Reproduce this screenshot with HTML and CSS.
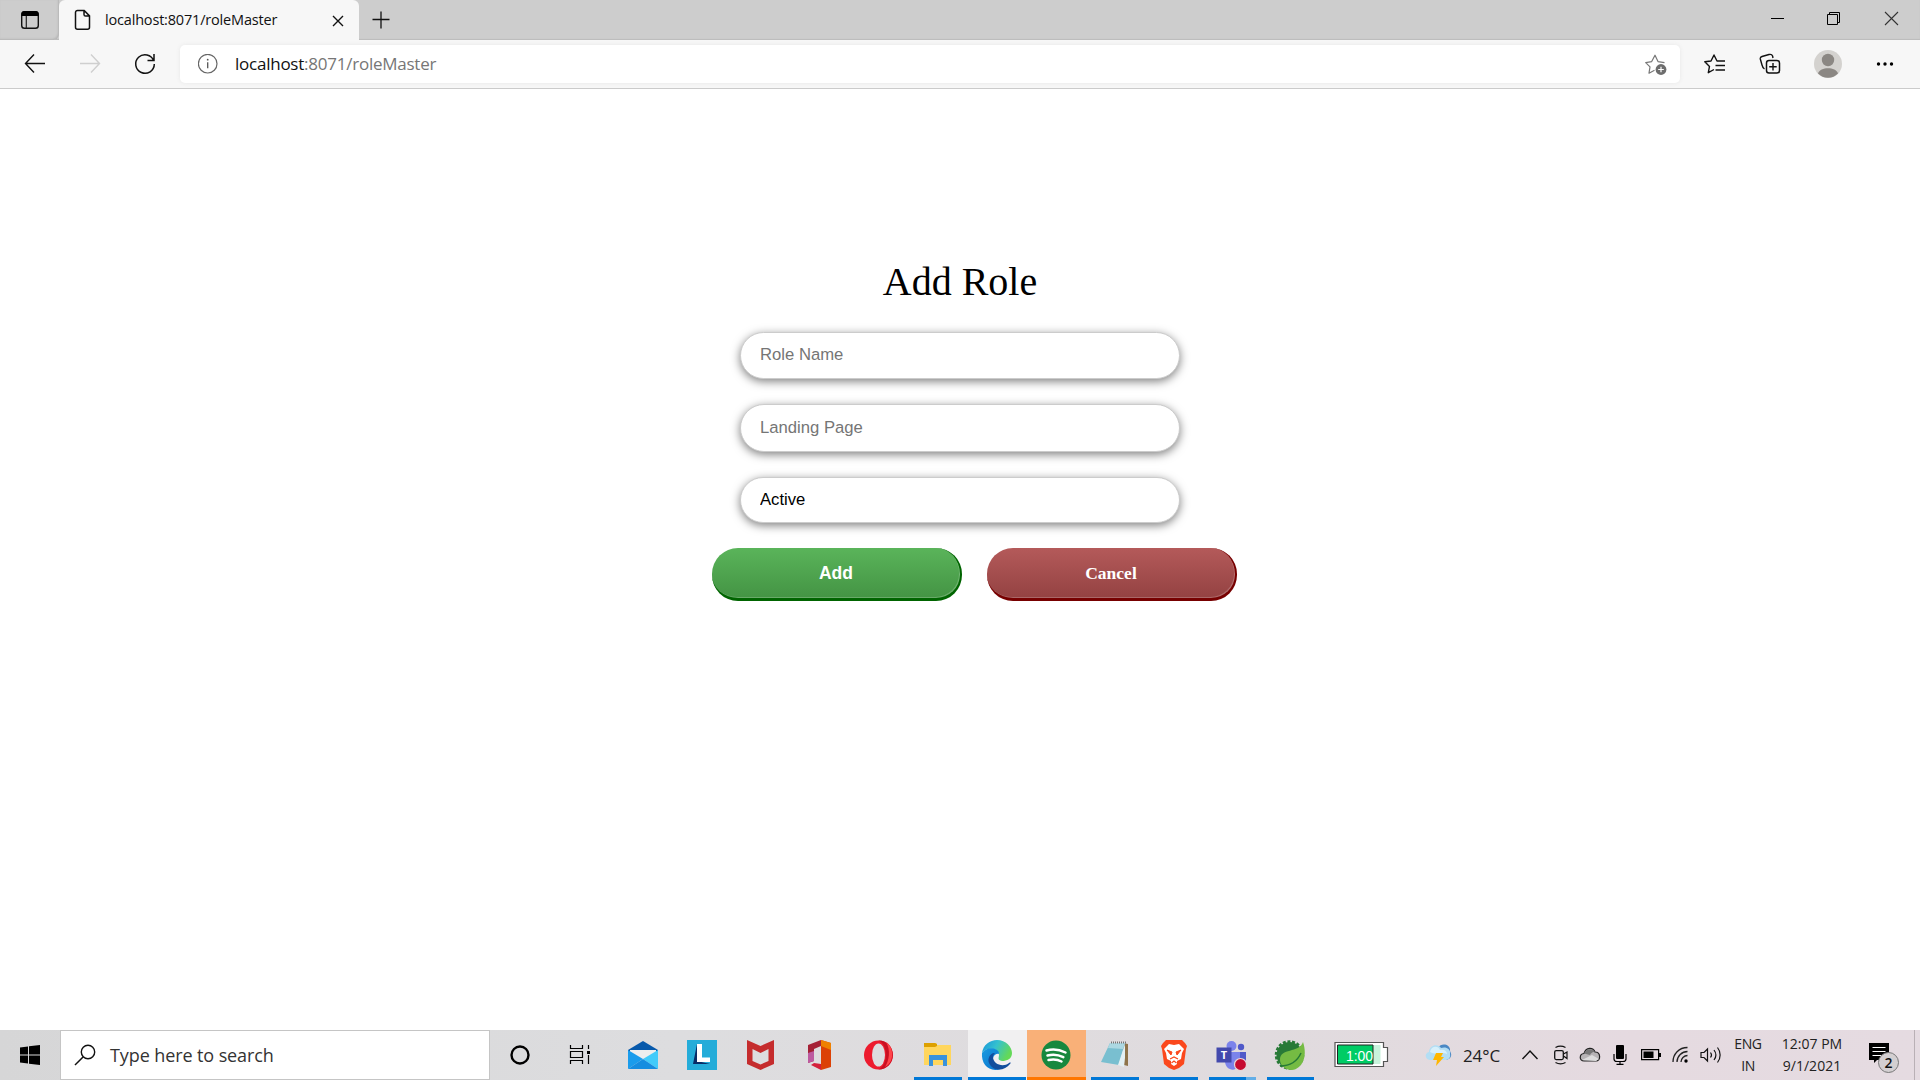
FILE: index.html
```html
<!DOCTYPE html>
<html lang="en">
<head>
<meta charset="utf-8">
<title>localhost:8071/roleMaster</title>
<link rel="stylesheet" href="styles.css">
</head>
<body>
<div class="screen">
  <header class="tabbar">
    <div class="tab-actions">
      <svg width="59" height="40" viewBox="0 0 59 40"><rect x="21.7" y="11.7" width="16.6" height="16.6" rx="2.8" fill="none" stroke="#111" stroke-width="1.4"/><path d="M21.5 16V14a3 3 0 0 1 3-3h11a3 3 0 0 1 3 3v2z" fill="#000"/><path d="M26.3 16v12" stroke="#222" stroke-width="1.2"/></svg>
    </div>
    <div class="tab">
      <svg class="tab-file" width="18" height="22" viewBox="0 0 18 22"><path d="M3.5 1.5h6.7l5.3 5.4v11.3a2 2 0 0 1-2 2h-10a2 2 0 0 1-2-2V3.500a2 2 0 0 1 2-2zM10 1.700v3.800a1.600 1.600 0 0 0 1.600 1.600h3.800" fill="none" stroke="#111" stroke-width="1.5"/></svg>
      <span class="tab-title">localhost:8071/roleMaster</span>
      <svg class="tab-close" width="12" height="12" viewBox="0 0 12 12"><path d="M1 1l10 10M11 1L1 11" stroke="#111" stroke-width="1.4"/></svg>
    </div>
    <svg class="tab-new" width="20" height="20" viewBox="0 0 20 20"><path d="M10 1.500v17M1.500 9.500h17" stroke="#111" stroke-width="1.300"/></svg>
    <div class="window-controls">
      <svg width="57" height="38" viewBox="0 0 57 38"><path d="M22 18.500h13" stroke="#000"/></svg>
      <svg width="57" height="38" viewBox="0 0 57 38"><path d="M21.500 14.500h10v10h-10zM23.500 14v-1.500h10v10H32" fill="none" stroke="#000"/></svg>
      <svg width="57" height="38" viewBox="0 0 57 38"><path d="M22 12l13 13M35 12L22 25" stroke="#333" stroke-width="1.100"/></svg>
    </div>
  </header>
  <nav class="toolbar">
    <svg width="69" height="48" viewBox="0 0 69 48"><path d="M45 23.500H26M34 14.500l-8.500 9 8.500 9" fill="none" stroke="#111" stroke-width="1.400"/></svg>
    <svg width="41" height="48" viewBox="0 0 41 48"><path d="M11 23.500h19.500M22 14.500l8.500 9-8.500 9" fill="none" stroke="#cfcfcf" stroke-width="1.400"/></svg>
    <svg width="70" height="48" viewBox="0 0 70 48"><path d="M43.700 20.700A9.300 9.300 0 1 0 44.300 24M44 14v6.500h-6.500" fill="none" stroke="#111" stroke-width="1.500"/></svg>
    <div class="address">
      <svg width="20" height="20" viewBox="0 0 20 20"><circle cx="9.700" cy="9.700" r="9.300" fill="none" stroke="#666" stroke-width="1.200"/><path d="M9.700 8.300v6" stroke="#555" stroke-width="1.300"/><circle cx="9.700" cy="5.700" r=".9" fill="#555"/></svg>
      <span class="url"><span class="url-host">localhost</span>:8071/roleMaster</span>
      <svg class="add-favorite" width="24" height="24" viewBox="0 0 24 24"><path d="M9.500 18.300l-5.500 2.900 1-6.300-4.300-4.300 6-1L10 3.200l3 6.400 6.500 1" fill="none" stroke="#777" stroke-width="1.200" stroke-linejoin="round"/><circle cx="16" cy="17.500" r="5.400" fill="#6d6d6d"/><path d="M16 14.700v5.600M13.200 17.500h5.600" stroke="#fff" stroke-width="1.200"/></svg>
    </div>
    <div class="tools">
      <svg width="22" height="22" viewBox="0 0 22 22"><path d="M10 16.500l-5.700 3.200 1.200-6.300-4.700-4.600 6.200-.8L10 2l3 6h8M11.500 12.500H21M11.500 17H21" fill="none" stroke="#111" stroke-width="1.400" stroke-linejoin="round"/></svg>
      <svg width="22" height="22" viewBox="0 0 22 22"><rect x="7.500" y="7.500" width="13" height="12.500" rx="2.500" fill="none" stroke="#111" stroke-width="1.500"/><path d="M14 10v7.500M10.200 13.700h7.500M5.500 16C4 15.200 3.500 14 3 12L1.300 6C1 4.500 1.500 4 3 3.500l7-2c2-.5 3 0 3.600 1.500L14 5" fill="none" stroke="#111" stroke-width="1.400"/></svg>
      <svg width="28" height="28" viewBox="0 0 28 28"><circle cx="14" cy="14" r="14" fill="#d4d2cf"/><circle cx="14" cy="10" r="6.200" fill="#8b8783"/><path d="M4 23.500c2-7 18-7 20 0a14 14 0 0 1-20 0z" fill="#8b8783"/></svg>
      <svg width="20" height="6" viewBox="0 0 20 6"><circle cx="3.500" cy="3" r="1.700"/><circle cx="10" cy="3" r="1.700"/><circle cx="16.500" cy="3" r="1.700"/></svg>
    </div>
  </nav>
  <main class="page">
    <h1 class="title">Add Role</h1>
    <form class="role-form">
      <input class="field" type="text" placeholder="Role Name">
      <input class="field field-landing" type="text" placeholder="Landing Page">
      <select class="field field-status"><option>Active</option></select>
      <div class="actions">
        <button class="button button-add" type="button">Add</button>
        <button class="button button-cancel" type="button">Cancel</button>
      </div>
    </form>
  </main>
  <footer class="taskbar">
    <div class="start"><svg width="20" height="20" viewBox="0 0 20 20"><path d="M0 2.500L8 1.500v8H0zM9 1.300L20 0v9.500H9zM0 10.500h8v8l-8-1zM9 10.500h11V20L9 18.700z"/></svg></div>
    <div class="search">
      <svg width="22" height="22" viewBox="0 0 22 22"><circle cx="14" cy="8" r="6.700" fill="none" stroke="#111" stroke-width="1.400"/><path d="M9.300 12.700L1 21" stroke="#111" stroke-width="1.500"/></svg>
      <span class="search-text">Type here to search</span>
    </div>
    <div class="apps">
      <svg class="app-cortana" width="59" height="50" viewBox="0 0 59 50"><circle cx="30" cy="25" r="8.500" fill="none" stroke="#000" stroke-width="2.400"/></svg>
      <svg class="app-taskview" width="65" height="50" viewBox="0 0 65 50"><path d="M21.500 15v3.500h12V15M21.500 34v-3.500h12V34M21.500 21.500h12v6h-12zM39.500 15v4M39.500 25v9" fill="none" stroke="#000" stroke-width="1.200"/><path d="M38 21h3v3h-3z"/></svg>
      <svg width="59" height="50" viewBox="0 0 59 50"><path d="M14 20L29 11l15 9v3H14z" fill="#0759ab"/><path d="M16 20h26v11H16z" fill="#eee"/><path d="M14 20l15 9-15 10z" fill="#1a9cec"/><path d="M44 20v19L29 29z" fill="#42cbfa"/><path d="M14 39l15-10 15 10z" fill="#168de0"/></svg>
      <svg width="59" height="50" viewBox="0 0 59 50"><path d="M14 10h30v30H14z" fill="#24acd9"/><path d="M24 14l-4 20h17l-13-3z" fill="#082c67"/><path d="M24 14h5v13.500h8V32H24z" fill="#fff"/></svg>
      <svg width="59" height="50" viewBox="0 0 59 50"><path d="M15 10l13.500 6 13.500-6v24L28.500 40l-13.500-6zM20.500 19v12l8 3.500 8-3.500V19l-8 4z" fill="#c52c2d" fill-rule="evenodd"/></svg>
      <svg width="59" height="50" viewBox="0 0 59 50"><path d="M17 15l13-5v6l-7 3v12l-6 2z" fill="#a52136"/><path d="M17 23l6-2v10l-6 2z" fill="#bd5ba0"/><path d="M30 10l10 3v24l-10 3z" fill="#dc4105"/><path d="M30 10l10 3v7l-10-4z" fill="#ef8000"/><path d="M20 35l3-2 7 1v6z" fill="#d4213c"/></svg>
      <svg width="59" height="50" viewBox="0 0 59 50"><ellipse cx="28.500" cy="25" rx="14.500" ry="14.500" fill="#ed1b2e"/><path d="M28.500 10.500c19 0 19 29 0 29 10-4 10-25 0-29z" fill="#c91022"/><path d="M35 37c10-5 9-20 1-25 5 8 3 19-1 25z" fill="#ff454b"/><ellipse cx="28.500" cy="25" rx="6.500" ry="11.500" fill="#dddcdf"/></svg>
      <svg class="app-running" width="59" height="50" viewBox="0 0 59 50"><path d="M15 13h12l1 2h14v20H15z" fill="#ffd65d"/><path d="M15 13h11l2 1v2l-2 1H15z" fill="#dda000"/><path d="M20 36V25h18v11h-4v-6H24v6z" fill="#3992db"/><path d="M5 47h48v3H5z" fill="#0078d7"/></svg>
      <svg class="app-edge" width="59" height="50" viewBox="0 0 59 50"><defs><linearGradient id="edgeTop" x2="1" y2=".4"><stop stop-color="#1793dc"/><stop offset=".5" stop-color="#35c1cf"/><stop offset="1" stop-color="#64d958"/></linearGradient><linearGradient id="edgeSide" y2="1"><stop stop-color="#1a9be0"/><stop offset="1" stop-color="#0870cc"/></linearGradient></defs><path d="M14 23c1-8 8-13 15-13 9 0 15 7 15 13 0 6-5 8-10 8-5-1-3-3-3-6 0-8-13-8-17-2z" fill="url(#edgeTop)"/><path d="M14 23c5-8 18-5 17 1-8-2-9 15 2 15C21 43 13 34 14 23z" fill="url(#edgeSide)"/><path d="M25 27c0 7 10 11 16 6 2-1 2 0 1 1-5 7-17 8-21-1-2-5 2-11 6-10-1 1-2 2-2 4z" fill="#124e9d"/><path d="M0 47h58v3H0z" fill="#0078d7"/></svg>
      <svg class="app-spotify" width="59" height="50" viewBox="0 0 59 50"><circle cx="29" cy="25" r="14.500" fill="#17883e"/><path d="M19.500 20.500c7-2 13-1 19 2M20.500 25.500c6-1.500 11-.8 15.800 1.700M21.500 30c5-1 9-.7 13 1.500" fill="none" stroke="#fff" stroke-width="2.500" stroke-linecap="round"/><path d="M0 47h59v3H0z" fill="#ff7600"/></svg>
      <svg width="59" height="50" viewBox="0 0 59 50"><path d="M37 13l5 1v22l-4-1z" fill="#8f744b"/><path d="M24 13h15l-6 22-18-3z" fill="#79bfd0"/><path d="M24 13h15l-2 6-15-1z" fill="#acd8e2"/><path d="M39 14l-7 21 6 2 1-9z" fill="#e3f0f4"/><path d="M25 12.500h15" stroke="#777" stroke-width="2" stroke-dasharray="1 1"/><path d="M5 47h48v3H5z" fill="#0078d7"/></svg>
      <svg width="59" height="50" viewBox="0 0 59 50"><path d="M21 10h16l3 3 2 3-1 3-2 15-5 4-5 2-5-2-5-4-2-15-1-3 2-3z" fill="#fb481d"/><path d="M24 14l5 1 5-1 5 5-2 4-1 6-4 2v3l-3 2-3-2v-3l-4-2-1-6-2-4z" fill="#fff"/><path d="M22 20l5 2-1 3zM36 20l-5 2 1 3z" fill="#fb481d" stroke="#fb481d" stroke-width="1"/><path d="M25 29l4-2 4 2M26.500 33l2.500-2 2.500 2" fill="none" stroke="#fb481d" stroke-width="1.200"/><path d="M5 47h48v3H5z" fill="#0078d7"/></svg>
      <svg width="59" height="50" viewBox="0 0 59 50"><circle cx="27.500" cy="16" r="5" fill="#7b83eb"/><circle cx="37" cy="17" r="3.200" fill="#5059c9"/><path d="M32 22h10v9c0 5-7 7-10 2z" fill="#5059c9"/><path d="M21 22h15v9c0 12-15 11-15 0z" fill="#7b83eb"/><path d="M12.500 17.500h15v15h-15z" fill="#4349ad"/><text class="teams-letter" x="20" y="29" text-anchor="middle">T</text><circle cx="36.500" cy="34.500" r="6" fill="#c60b30" stroke="#e7dada" stroke-width="1.200"/><path d="M5 47h37v3H5z" fill="#0078d7"/><path d="M42 47h10v3H42z" fill="#63aee7"/></svg>
      <svg width="59" height="50" viewBox="0 0 59 50"><circle cx="26.500" cy="25" r="13" fill="#287a37"/><circle cx="26.500" cy="25" r="13.500" fill="none" stroke="#287a37" stroke-width="2.500" stroke-dasharray="3 1.700"/><path d="M40 12c5 15-1 27-11 28-7 0-12-5-12-10 0-13 19-6 23-18z" fill="#75bb43"/><path d="M17 36c10 0 17-4 21-13" fill="none" stroke="#267a36" stroke-width="1.500"/><path d="M4 47h47v3H4z" fill="#0078d7"/></svg>
      <svg class="battery-meter" width="70" height="50" viewBox="0 0 70 50"><path d="M13 12.500h48.500v5h4v14h-4v5H13z" fill="#fff" stroke="#555" stroke-width="1.200"/><path d="M15.500 15h43v19h-43z" fill="#c9f2dc"/><path d="M15.500 15h35.500v19H15.500z" fill="#00cc65" stroke="#222" stroke-width="1"/><text class="battery-time" x="37.500" y="30.500" text-anchor="middle">1:00</text></svg>
    </div>
    <div class="tray">
      <svg class="weather" width="28" height="24" viewBox="0 0 28 24"><path d="M13 5c3-6 13-4 12 3 3 5 0 9-5 9z" fill="#4a88c4"/><path d="M5 17C0 17-1 10 4 9c0-7 9-9 12-4 6-2 10 2 9 6 1 4-2 6-5 6z" fill="#b3def4"/><path d="M5 9c1-6 8-7 10-2 4-1 7 1 7 4-5-3-10 2-17-2z" fill="#d7f0fb"/><path d="M11 10h7l-2 4h3l-8 9 1-6H8z" fill="#ffb700"/></svg>
      <span class="temperature">24°C</span>
      <svg class="chevron" width="18" height="12" viewBox="0 0 18 12"><path d="M1.500 10L9 2l7.500 8" fill="none" stroke="#111" stroke-width="1.400"/></svg>
      <svg class="meet" width="18" height="20" viewBox="0 0 18 20"><rect x="2.700" y="5.600" width="8.600" height="9" rx="1.500" fill="none" stroke="#111" stroke-width="1.300"/><path d="M11.500 9l3.500-2v6.500L11.500 11M3.500 2.500c3-1.600 7-1.600 10 0M3.500 17.500c3 1.600 7 1.600 10 0" fill="none" stroke="#111" stroke-width="1.200"/></svg>
      <svg class="cloud" width="22" height="16" viewBox="0 0 22 16"><path d="M5 14C0 14 0 7 5 6.500 7 0 14 0 16 5c6 0 6 9 1 9z" fill="#b7b4b6" stroke="#222" stroke-width="1.200"/><path d="M5 6.500C7 1 13 1 16 5c-4 0-4 2-5 3z" fill="#777"/><path d="M3 13l10-5 7 4-3 2z" fill="#ddd"/></svg>
      <svg class="mic" width="14" height="20" viewBox="0 0 14 20"><rect x="3" y="0" width="8" height="14" rx="1"/><path d="M1 9v5c0 2 1 2.500 3 2.500h6c2 0 3-.5 3-2.500V9M7 17v2M3.500 19.400h7" fill="none" stroke="#000" stroke-width="1.200"/></svg>
      <svg class="charge" width="20" height="12" viewBox="0 0 20 12"><path d="M.6.600h17v10H.6z" fill="none" stroke="#000" stroke-width="1.200"/><path d="M2.500 2.500h10v6.500h-10zM18 4h2v4h-2z"/></svg>
      <svg class="wifi" width="18" height="18" viewBox="0 0 18 18"><path d="M1 16C1 8 7 1.500 15.500 1.500M5 16c0-6 5-10.500 10.500-10.500M9 16c0-3.500 3-6.500 6.500-6.500" fill="none" stroke="#222" stroke-width="1.300"/><circle cx="14" cy="15" r="1.700"/></svg>
      <svg class="volume" width="22" height="18" viewBox="0 0 22 18"><path d="M1 6.500h3L7.500 3v12L4 11.500H1zM10.500 6.500c1.200 1.500 1.200 3.500 0 5M14 4c2.300 3 2.300 7 0 10M17.500 1.500c3.500 4.500 3.500 10.500 0 15" fill="none" stroke="#111" stroke-width="1.200"/></svg>
      <div class="stack language"><span>ENG</span><span>IN</span></div>
      <div class="stack clock"><span>12:07 PM</span><span class="date">9/1/2021</span></div>
      <svg class="notifications" width="32" height="32" viewBox="0 0 32 32"><path d="M0 1h20v17H8l-3 3v-3H0z"/><path d="M3.500 5.500h13M3.500 9.500h13M3.500 13.500h9" stroke="#fff" stroke-width="1.200"/><circle cx="19.500" cy="20.500" r="10" fill="#d3cfd1" stroke="#777" stroke-width="1"/><text class="notification-count" x="19.500" y="25.500" text-anchor="middle">2</text></svg>
      <div class="show-desktop"></div>
    </div>
  </footer>
</div>
</body>
</html>
```
FILE: styles.css
```css
* { box-sizing: border-box; }
body { margin: 0; background: #fff; }
svg { display: block; flex: none; }
.screen {
  display: flex;
  flex-direction: column;
  width: 1920px;
  height: 1080px;
  overflow: hidden;
  font-family: "Open Sans", "Noto Sans", sans-serif;
  white-space: nowrap;
}

/* Browser tabs */
.tabbar {
  display: flex;
  height: 40px;
  background: #cdcdcd;
  box-shadow: inset 0 -1px 1px #bcbcbc;
}
.tab-actions {
  width: 59px;
  border-bottom-right-radius: 6px;
  box-shadow: inset -1px -1px 2px #b5b5b5;
  background: #cdcdcd;
}
.tab {
  display: flex;
  align-items: center;
  width: 300px;
  padding: 0 15px;
  background: #f7f7f7;
  border-radius: 6px 6px 0 0;
}
.tab-title {
  width: 188px;
  margin: 0 0 2px 13px;
  font-size: 14.5px;
  letter-spacing: -0.18px;
  color: #111;
}
.tab-close { margin: 1px 0 0 auto; }
.tab-new { margin: 10px 0 0 12px; }
.window-controls { display: flex; margin-left: auto; }

/* Address row */
.toolbar {
  display: flex;
  height: 49px;
  background: #f7f7f7;
  border-bottom: 1px solid #cbcbcb;
}
.address {
  display: flex;
  align-items: center;
  width: 1500px;
  height: 38px;
  margin-top: 5px;
  padding: 0 11px 0 18px;
  background: #fff;
  border-radius: 5px;
  box-shadow: 0 0 4px #e7e7e7;
}
.url {
  margin: 0 0 2px 17px;
  font-size: 17px;
  letter-spacing: -0.24px;
  color: #767676;
}
.url-host { color: #111; }
.add-favorite { margin-left: auto; }
.tools {
  display: flex;
  align-items: center;
  gap: 33px;
  margin-left: 24px;
}

/* Form page */
.page {
  flex: 1;
  display: flex;
  flex-direction: column;
  align-items: center;
}
.title {
  height: 46px;
  margin: 170px 0 0;
  font: 40px/46px "Liberation Serif", serif;
  color: #000;
}
.role-form {
  display: flex;
  flex-direction: column;
  align-items: center;
  margin-top: 27px;
}
.field {
  appearance: none;
  width: 440px;
  height: 47px;
  margin: 0 0 25px;
  padding: 0 19px 2px;
  font: 16.67px "Liberation Sans", sans-serif;
  color: #000;
  background: #fff;
  border: 1px solid #ccc;
  border-radius: 25px;
  box-shadow: 0 2.500px 10px rgba(0, 0, 0, 0.5);
}
.field::placeholder { color: #757575; opacity: 1; }
.field-landing { height: 48px; padding-bottom: 1px; }
.field-status { height: 46px; padding-bottom: 1px; }
.actions {
  display: flex;
  gap: 25px;
  margin-left: 29px;
}
.button {
  width: 250px;
  height: 53px;
  margin-top: -0.5px;
  padding: 1px 0 0;
  color: #fff;
  border: 0 solid;
  border-width: 0 2px 3px 0;
  border-radius: 26px;
}
.button-add {
  font: bold 17.500px "Liberation Sans", sans-serif;
  background: linear-gradient(#5ab45a, #449444);
  border-color: #006400;
  box-shadow: inset -1px -1px rgba(255, 255, 255, 0.2);
}
.button-cancel {
  font: bold 17.500px "Liberation Serif", serif;
  background: linear-gradient(#b45a5a, #944242);
  border-color: #770000;
  box-shadow: inset -1px -1px rgba(255, 255, 255, 0.2);
}

/* Desktop taskbar */
.taskbar {
  display: flex;
  height: 50px;
  background: linear-gradient(90deg, #d6d6d7, #dddddf 35%, #e0dbde 65%, #e5dae0 85%, #e5dbe1);
}
.start {
  display: flex;
  align-items: center;
  justify-content: center;
  width: 60px;
}
.search {
  display: flex;
  align-items: center;
  width: 430px;
  padding-left: 13px;
  background: #fff;
  border: 1px solid #c5c5c5;
}
.search-text {
  margin-left: 14px;
  font-size: 18px;
  letter-spacing: -0.1px;
  color: #333;
}
.apps { display: flex; }
.app-edge { background: #f1f0f1; }
.app-spotify { background: #f9b078; }
.teams-letter { font: bold 11px "Open Sans", sans-serif; fill: #fff; }
.battery-time { font: 14px "Liberation Sans", sans-serif; fill: #fff; }
.tray {
  flex: 1;
  display: flex;
  align-items: center;
  color: #222;
}
.weather { margin-left: 33px; }
.temperature { width: 40px; margin: 1px 0 0 10px; font-size: 17px; letter-spacing: -0.1px; }
.chevron { margin-left: 18px; }
.meet { margin-left: 13px; }
.cloud { margin-left: 9px; }
.mic { margin-left: 12px; }
.charge { margin-left: 14px; }
.wifi { margin-left: 11px; }
.volume { margin-left: 10px; }
.stack {
  display: flex;
  flex-direction: column;
  align-items: center;
  font-size: 14px;
  line-height: 22px;
  letter-spacing: -0.4px;
}
.language { width: 32px; margin-left: 10px; }
.clock { width: 66px; margin-left: 15px; letter-spacing: 0; }
.notifications { margin: 6px 0 0 24px; }
.notification-count { font: 600 14px "Open Sans", sans-serif; fill: #111; }
.show-desktop { height: 50px; margin-left: auto; width: 6px; border-left: 1px solid #b9b0b5; }
```
